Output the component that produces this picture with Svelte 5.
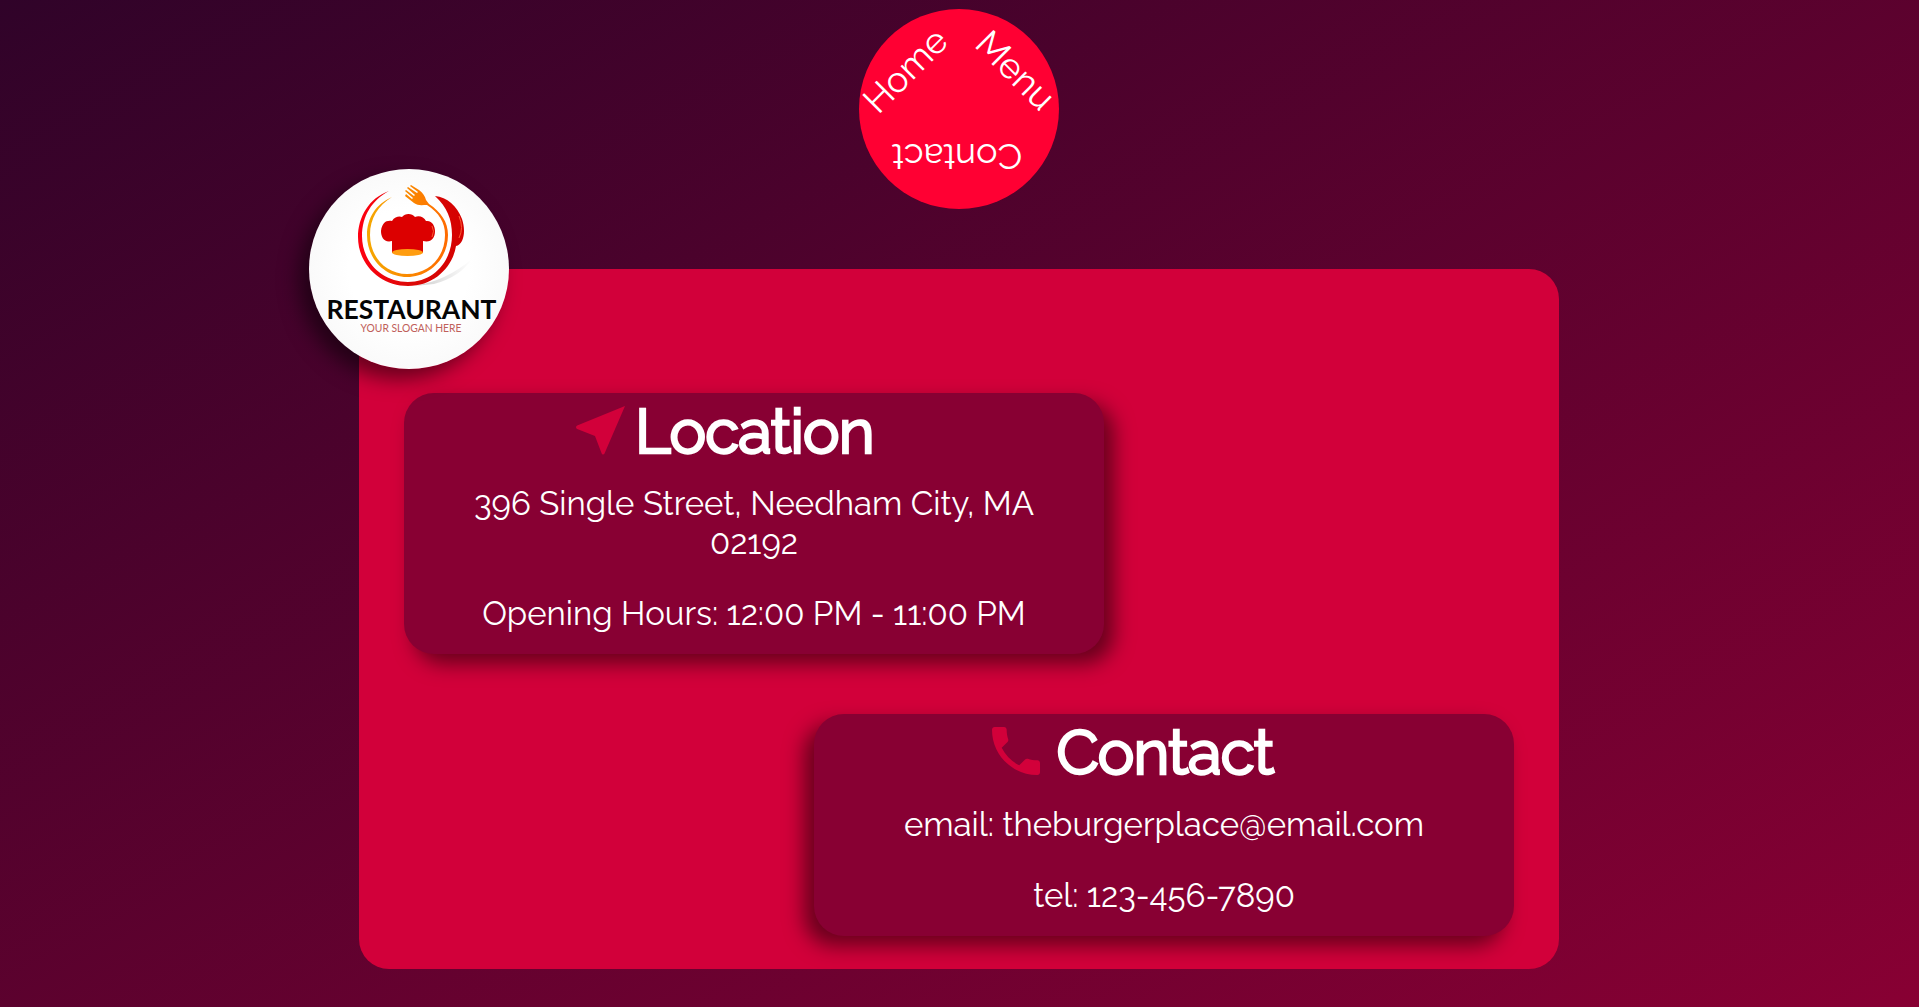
<script>
  const nav = [
    { label: 'Home', cls: 'home' },
    { label: 'Menu', cls: 'menu' },
    { label: 'Contact', cls: 'contact' }
  ];
</script>

<main>
  <nav>
    {#each nav as item}
      <a class={item.cls} href="#top">{item.label}</a>
    {/each}
  </nav>

  <section class="panel">
    <div class="logo">
      <svg viewBox="0 0 200 200" width="200" height="200">
        <defs>
          <radialGradient id="plate"><stop offset="0.6" stop-color="#fff" /><stop offset="1" stop-color="#fafafa" /></radialGradient>
          <linearGradient id="ring" x1="0" x2="1"><stop offset="0" stop-color="#f01" /><stop offset="0.5" stop-color="#dc0a08" /><stop offset="1" stop-color="#d40000" /></linearGradient>
          <linearGradient id="inner" x1="0" x2="1"><stop offset="0" stop-color="#f5a800" /><stop offset="1" stop-color="#ff6a00" /></linearGradient>
          <linearGradient id="shade" x1="0" x2="1"><stop offset="0" stop-color="#ccc" /><stop offset="1" stop-color="#fff" /></linearGradient>
        </defs>
        <circle cx="100" cy="100" r="100" fill="url(#plate)" />
        <path d="M105 117Q137 112 163 90Q151 108 125 115Z" fill="url(#shade)" />
        <path d="M80 22C60 29 49 48 49 68C49 96 72 117 99 117C126 117 144 97 147 77C155 75 157 62 153 50C148 37 138 28 126 27C138 38 143 50 143 66C143 92 125 113 99 113C73 113 53 93 53 67C53 47 63 31 80 22Z" fill="url(#ring)" />
        <path d="M83 28C67 35 58 49 58 66C58 90 76 108 98 108C121 108 139 89 139 66C139 53 132 43 120 35L117 31C116 27 114 24 110 21L102 16L101 17L109 23L108 24L99 18L98 19L106 26L105 27L97 21L96 22L104 29L103 30L97 25L96 27L105 34C109 37 113 36 118 36C130 44 136 53 136 66C136 88 120 105 98 105C77 105 61 88 61 66C61 49 69 37 83 28Z" fill="url(#inner)" />
        <path d="M83 84V72C75 74 72 68 72 62C73 54 77 51 83 52C86 47 91 47 93 48C96 44 103 44 106 48C110 46 115 48 117 52C123 51 126 57 126 62C126 69 122 74 114 72V84Z" fill="#dc0000" />
        <ellipse cx="98.500" cy="83.500" rx="15.500" ry="3.500" fill="#ff9d10" />
        <path d="M123 57Q126 62 123 68M150 47Q155 59 150 69" fill="none" stroke="#ff5a35" stroke-width="1" />
        <text class="brand" x="102.500" y="150" text-anchor="middle" textLength="170" lengthAdjust="spacingAndGlyphs">RESTAURANT</text>
        <text class="slogan" x="102" y="162.500" text-anchor="middle" textLength="101" lengthAdjust="spacingAndGlyphs">YOUR SLOGAN HERE</text>
      </svg>
    </div>

    <article class="card location">
      <h2>
        <svg viewBox="0 0 49 49" width="49" height="49"><path d="M49 0L28.500 47.500Q28 48.500 27 48.500Q26 48.500 25.700 47.500L19 30L1.200 23Q0 22.500 0 21.300Q0 20 1.200 19.500Z" /></svg>
        <span>Location</span>
      </h2>
      <p class="address">396 Single Street, Needham City, MA<br />02192</p>
      <p class="hours">Opening Hours: 12:00 PM - 11:00 PM</p>
    </article>

    <article class="card reach">
      <h2>
        <svg viewBox="3 3 18 18" width="48" height="48"><path d="M6.620 10.790c1.440 2.830 3.760 5.140 6.590 6.590l2.200-2.200c.27-.27.67-.36 1.020-.24 1.120.37 2.330.57 3.570.57.55 0 1 .45 1 1V20c0 .55-.45 1-1 1-9.390 0-17-7.610-17-17 0-.55.45-1 1-1h3.500c.55 0 1 .45 1 1 0 1.250.2 2.450.57 3.570.11.35.03.74-.25 1.020l-2.200 2.200z" /></svg>
        <span>Contact</span>
      </h2>
      <p class="email">email: theburgerplace@email.com</p>
      <p class="tel">tel: 123-456-7890</p>
    </article>
  </section>
</main>

<style>
  :global(body) { margin: 0; }
  main {
    box-sizing: border-box;
    height: 1007px;
    padding: 9px 1px 0 0;
    overflow: hidden;
    display: flex;
    flex-direction: column;
    align-items: center;
    background: linear-gradient(to bottom right, #300329, #880033);
    color: #fff;
    font-family: Raleway, Lato, "Open Sans", sans-serif;
    font-weight: 400;
  }
  nav {
    position: relative;
    flex: none;
    width: 200px;
    height: 200px;
    border-radius: 50%;
    background: #ff0033;
  }
  nav a {
    position: absolute;
    color: #fff;
    font-size: 36px;
    line-height: 42px;
    text-decoration: none;
    transform: translate(-50%, -50%) rotate(var(--turn));
  }
  .home { left: 46px; top: 61px; --turn: -45deg; }
  .menu { left: 157px; top: 61px; --turn: 45deg; }
  .contact { left: 98px; top: 148px; --turn: 180deg; }
  .panel {
    box-sizing: border-box;
    position: relative;
    flex: none;
    width: 1200px;
    height: 700px;
    margin-top: 60px;
    padding: 124px 45px 33px;
    display: flex;
    flex-direction: column;
    justify-content: space-between;
    border-radius: 30px;
    background: #d2003a;
  }
  .logo {
    position: absolute;
    left: -50px;
    top: -100px;
    width: 200px;
    height: 200px;
    border-radius: 50%;
    box-shadow: -10px 10px 20px rgba(0, 0, 0, 0.5);
  }
  .logo svg { display: block; }
  .brand { font: 700 27.500px Lato, sans-serif; fill: #050505; }
  .slogan { font: 400 12px Lato, sans-serif; fill: #c0605a; }
  .card {
    box-sizing: border-box;
    width: 700px;
    border-radius: 30px;
    background: #880033;
    text-align: center;
  }
  .location { height: 261px; box-shadow: 10px 10px 20px rgba(0, 0, 0, 0.5); }
  .reach { height: 222px; align-self: flex-end; box-shadow: -10px 10px 20px rgba(0, 0, 0, 0.5); }
  h2 {
    margin: 0;
    height: 76px;
    display: flex;
    justify-content: center;
    font-size: 61.500px;
    line-height: 76px;
    font-weight: 400;
    letter-spacing: -0.8px;
    -webkit-text-stroke: 2.600px #fff;
  }
  .location h2 { padding-right: 58px; }
  .reach h2 { padding-right: 62px; }
  h2 svg { margin-top: 13px; fill: #d2003a; flex: none; }
  .location h2 svg { margin-right: 10px; }
  .reach h2 svg { margin-right: 16px; }
  p {
    margin: 0;
    font-size: 33px;
    line-height: 39px;
    white-space: nowrap;
  }
  .address, .email { margin-top: 15px; }
  .hours, .tel { margin-top: 32px; }
</style>
